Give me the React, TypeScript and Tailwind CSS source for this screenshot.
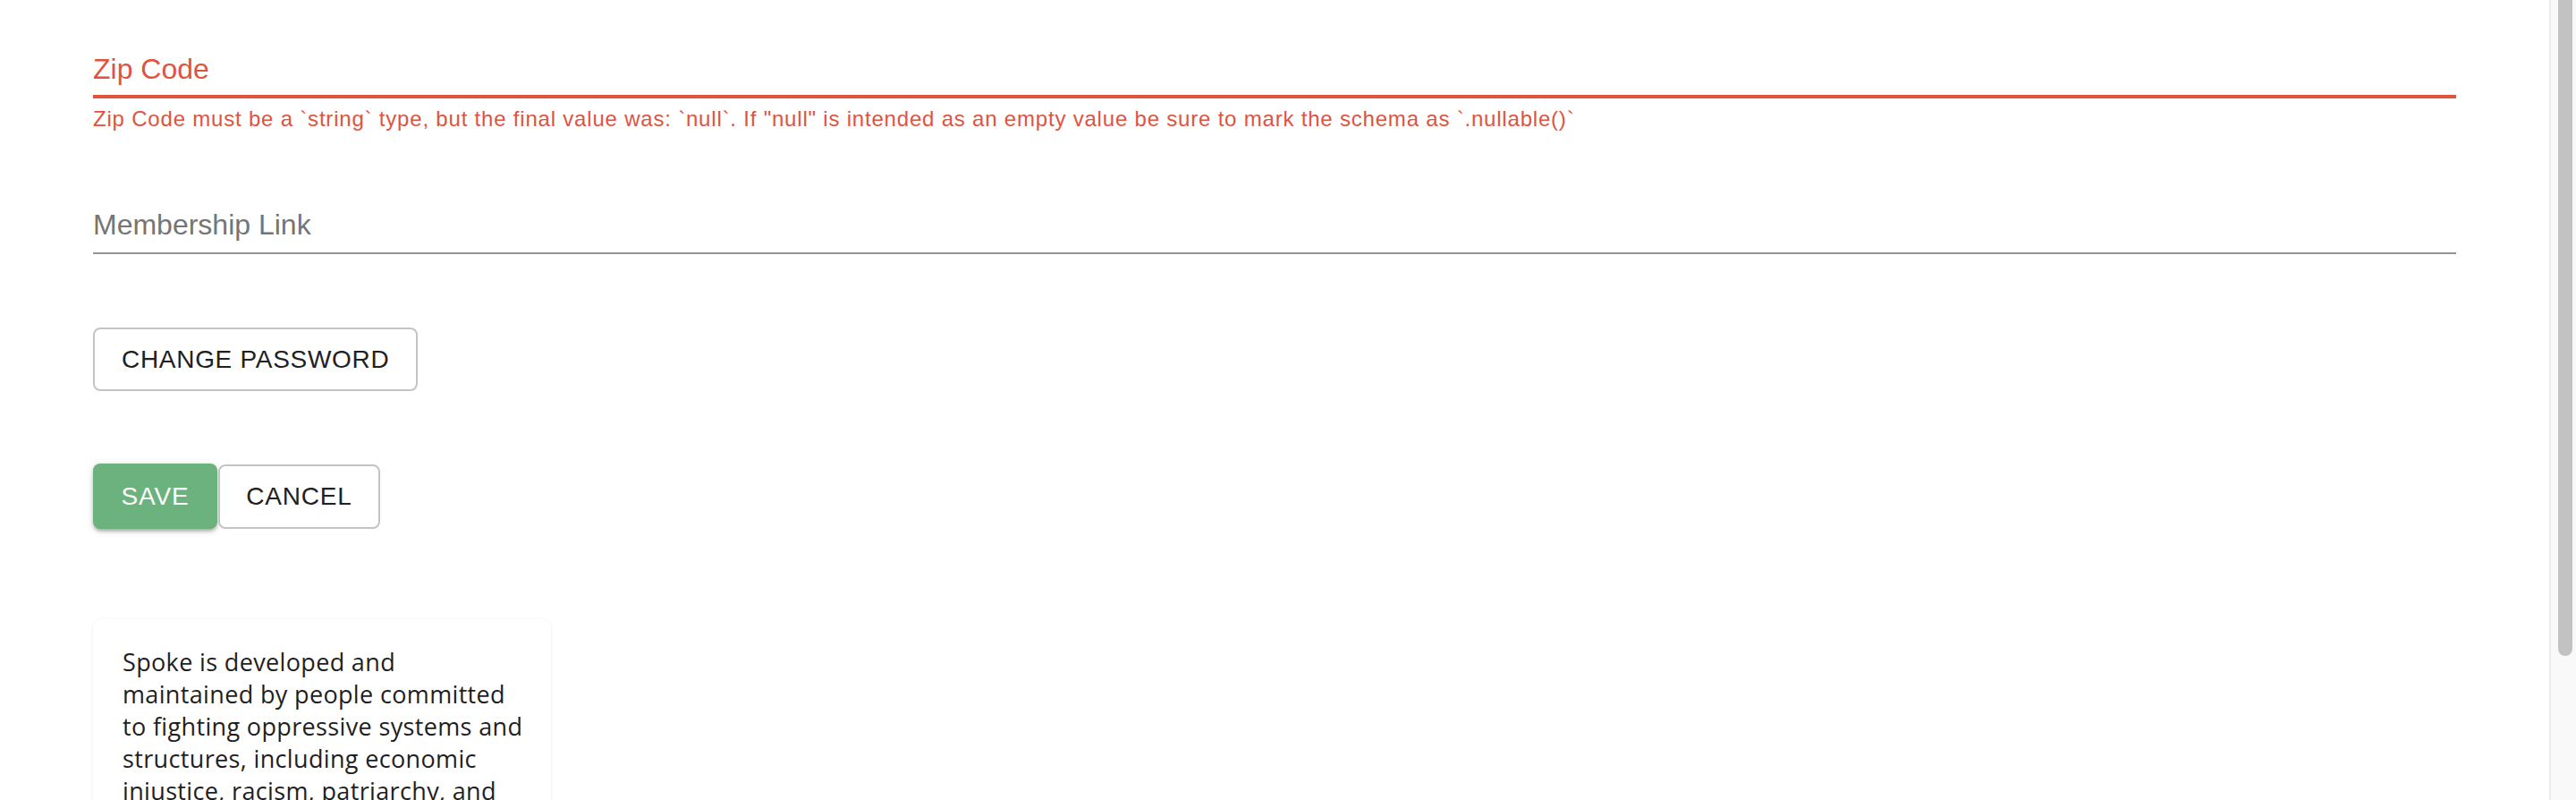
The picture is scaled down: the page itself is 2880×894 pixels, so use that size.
import React from 'react';

const errorText =
  'Zip Code must be a `string` type, but the final value was: `null`. If "null" is intended as an empty value be sure to mark the schema as `.nullable()`';

const aboutLines = [
  'Spoke is developed and',
  'maintained by people committed',
  'to fighting oppressive systems and',
  'structures, including economic',
  'injustice, racism, patriarchy, and',
  'militarism.',
];

const App: React.FC = () => {
  return (
    <div className="flex h-screen w-full overflow-hidden bg-white font-['Liberation_Sans',Arial,sans-serif]">
      <main className="flex-1 px-[104px] pt-[58px]">
        {/* zip code field, in error state */}
        <div className="border-b-4 border-[#e0533f] pb-[10px]">
          <span className="block text-[32px] leading-[38px] text-[#e0533f]">Zip Code</span>
        </div>
        <p className="mt-[9px] text-[24px] leading-[28px] tracking-[0.8px] text-[#e0533f]">{errorText}</p>

        {/* membership link field */}
        <div className="mt-[85px] border-b-2 border-[#949494] pb-[12px]">
          <span className="block text-[32px] leading-[38px] text-[#757575]">Membership Link</span>
        </div>

        <button className="mt-[82px] flex h-[71px] items-center rounded-[8px] border-2 border-[#c4c4c4] bg-white px-[30px] text-[28px] tracking-[0.7px] text-[#212121]">
          CHANGE PASSWORD
        </button>

        <div className="mt-[81px] flex items-start gap-[1px]">
          <button className="flex h-[73px] w-[139px] items-center justify-center rounded-[8px] bg-[#6cb27e] text-[28px] tracking-[0.8px] text-white shadow-[0_4px_4px_-2px_rgba(0,0,0,0.2),0_2px_4px_rgba(0,0,0,0.14),0_2px_10px_rgba(0,0,0,0.12)]">
            SAVE
          </button>
          <button className="mt-[1px] flex h-[72px] w-[181px] items-center justify-center rounded-[8px] border-2 border-[#c4c4c4] bg-white text-[28px] tracking-[0.8px] text-[#212121]">
            CANCEL
          </button>
        </div>

        <div className="mt-[101px] w-[512px] rounded-[10px] bg-white pb-[32px] pl-[33px] pr-[16px] pt-[30px] shadow-[0_1px_4px_rgba(0,0,0,0.09)]">
          <p className="whitespace-nowrap font-['Open_Sans',sans-serif] text-[27px] leading-[36px] tracking-[0.35px] text-[#1f1f1f]">
            {aboutLines.map((line, i) => (
              <React.Fragment key={i}>
                {line}
                {i < aboutLines.length - 1 && <br />}
              </React.Fragment>
            ))}
          </p>
        </div>
      </main>

      {/* scrollbar */}
      <div className="flex w-[30px] shrink-0 justify-center border-l-2 border-[#ececec] bg-[#f9f9f9]">
        <div className="ml-[4px] h-[733px] w-[16px] rounded-b-[8px] bg-[#c2c2c2]" />
      </div>
    </div>
  );
};

export default App;
